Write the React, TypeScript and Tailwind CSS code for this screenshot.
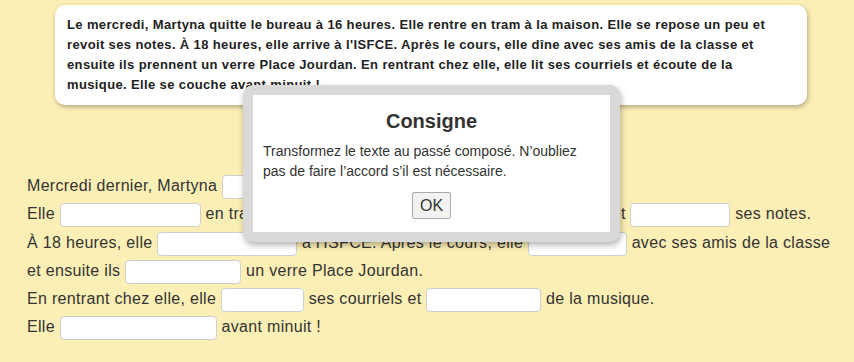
const Blank = ({ w }: { w: number }) => (
  <input
    type="text"
    readOnly
    style={{ width: w }}
    className="inline-block h-[24px] align-middle bg-white border border-[#cfcfcf] rounded-[4px] outline-none"
  />
);

export default function App() {
  return (
    <div className="relative w-[854px] h-[362px] overflow-hidden bg-[#fcefb5] font-['Liberation_Sans',Arial,sans-serif]">
      {/* original text */}
      <div className="ml-[55px] mt-[5px] w-[752px] bg-white rounded-[10px] shadow-[1px_2px_5px_rgba(0,0,0,0.3)] px-[12px] py-[10px] text-[13px] leading-[20px] tracking-[0.37px] font-bold text-[#222]">
        Le mercredi, Martyna quitte le bureau à 16 heures. Elle rentre en tram à la maison. Elle se repose un peu et
        revoit ses notes. À 18 heures, elle arrive à l'ISFCE. Après le cours, elle dîne avec ses amis de la classe et
        ensuite ils prennent un verre Place Jourdan. En rentrant chez elle, elle lit ses courriels et écoute de la
        musique. Elle se couche avant minuit !
      </div>

      {/* exercise */}
      <div className="mt-[67px] pl-[27px] text-[16px] tracking-[0.32px] text-[#333]">
        <div className="h-[28px] leading-[28px] whitespace-nowrap">
          Mercredi dernier, Martyna <Blank w={110} /> le bureau à 16 heures.
        </div>
        <div className="h-[28px] leading-[28px] whitespace-nowrap">
          Elle <Blank w={141} /> en tram à la maison. Elle <Blank w={157} /> un peu et <Blank w={100} /> ses notes.
        </div>
        <div className="h-[29px] leading-[29px] whitespace-nowrap">
          À 18 heures, elle <Blank w={140} /> à l'ISFCE. Après le cours, elle <Blank w={99} /> avec ses amis de la classe
        </div>
        <div className="h-[28px] leading-[28px] whitespace-nowrap">
          et ensuite ils <Blank w={116} /> un verre Place Jourdan.
        </div>
        <div className="h-[28px] leading-[28px] whitespace-nowrap">
          En rentrant chez elle, elle <Blank w={83} /> ses courriels et <Blank w={115} /> de la musique.
        </div>
        <div className="h-[28px] leading-[28px] whitespace-nowrap">
          Elle <Blank w={157} /> avant minuit !
        </div>
      </div>

      {/* instruction dialog */}
      <div className="absolute left-[243px] top-[85px] w-[377px] h-[157px] bg-[#d9d9d9] rounded-[10px] p-[10px] shadow-[1px_3px_6px_rgba(0,0,0,0.3)]">
        <div className="h-full bg-white px-[10px] pt-[14px] text-[#333]">
          <div className="text-center text-[20px] leading-[24px] font-bold text-[#333]">Consigne</div>
          <p className="mt-[8px] text-[14px] leading-[20px]">
            Transformez le texte au passé composé. N’oubliez
            <br />
            pas de faire l’accord s’il est nécessaire.
          </p>
          <div className="mt-[11px] flex justify-center">
            <button className="h-[27px] px-[7px] text-[16px] leading-none text-[#333] bg-[#f2f2f2] border border-[#aaa] rounded-[2px]">
              OK
            </button>
          </div>
        </div>
      </div>
    </div>
  );
}
